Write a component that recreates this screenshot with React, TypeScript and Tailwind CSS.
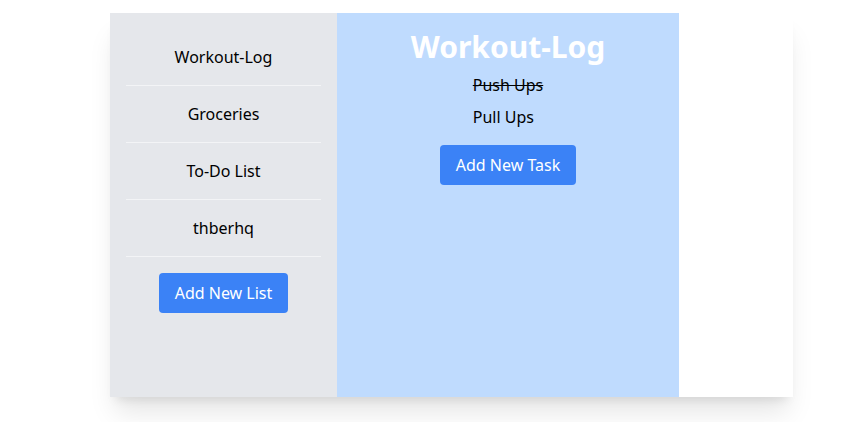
import React from 'react';

const lists = ['Workout-Log', 'Groceries', 'To-Do List', 'thberhq'];

const tasks = [
  { name: 'Push Ups', done: true },
  { name: 'Pull Ups', done: false },
];

export default function App() {
  return (
    <div className="w-[844px] h-[422px] bg-white" style={{ fontFamily: '"Noto Sans", "Open Sans", sans-serif' }}>
      <div className="ml-[110px] pt-[13px]">
        <div className="w-[683px] h-[384px] flex shadow-xl bg-white">
          <div className="w-[227px] bg-[#e5e7eb] pt-4 px-4 flex flex-col items-stretch">
            {lists.map((name) => (
              <div key={name} className="py-4 text-center text-base leading-6 text-black border-b border-[#f3f4f6]">
                {name}
              </div>
            ))}
            <div className="flex justify-center mt-4">
              <button className="px-4 py-2 bg-[#3b82f6] text-white rounded text-base leading-6">
                Add New List
              </button>
            </div>
          </div>
          <div className="w-[342px] bg-[#bfdbfe] pt-4 flex flex-col items-center">
            <h1 className="text-3xl leading-9 font-bold text-white mb-1">Workout-Log</h1>
            <ul className="flex flex-col items-start">
              {tasks.map((t) => (
                <li key={t.name} className={`py-1 text-base leading-6 text-black ${t.done ? 'line-through' : ''}`}>
                  {t.name}
                </li>
              ))}
            </ul>
            <button className="mt-3 px-4 py-2 bg-[#3b82f6] text-white rounded text-base leading-6">
              Add New Task
            </button>
          </div>
          <div className="flex-1" />
        </div>
      </div>
    </div>
  );
}
